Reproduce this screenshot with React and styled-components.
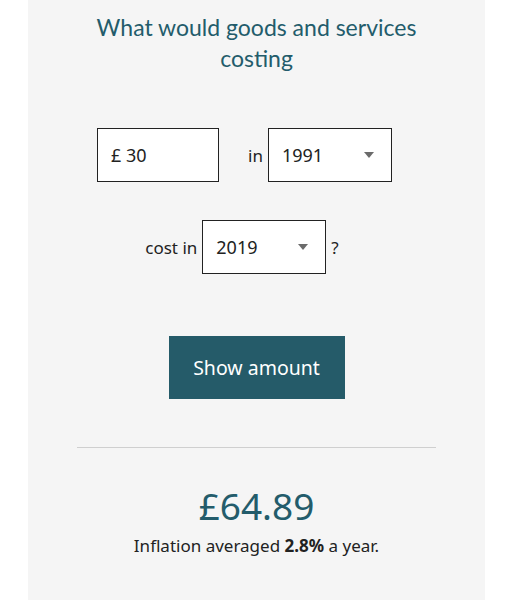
import React from 'react'
import styled, { createGlobalStyle } from 'styled-components'

const GlobalStyle = createGlobalStyle`
    body {
        margin: 0;
        background: #ffffff;
        font-family: 'Noto Sans', 'Open Sans', sans-serif;
    }
`

const Panel = styled.main`
    width: 457px;
    min-height: 600px;
    margin: 0 auto;
    padding: 12px 0 40px;
    box-sizing: border-box;
    background: #f5f5f5;
    display: flex;
    flex-direction: column;
    align-items: center;
`

const Heading = styled.h1`
    margin: 0;
    width: 340px;
    font-family: Lato, 'Noto Sans', sans-serif;
    font-size: 23px;
    line-height: 31px;
    font-weight: 400;
    text-align: center;
    color: #235c6b;
`

const Row = styled.div`
    display: flex;
    align-items: center;
    justify-content: center;
    padding-right: 24px;
    margin-top: ${(p) => p.$top}px;
    font-size: 17px;
    color: #222;
`

const Label = styled.span`
    margin: 0 ${(p) => p.$right || 5}px 0 ${(p) => p.$left || 0}px;
`

const Field = styled.div`
    width: ${(p) => p.$width}px;
    height: 54px;
    box-sizing: border-box;
    border: 1.5px solid #222;
    background: #fff;
    display: flex;
    align-items: center;
    justify-content: space-between;
    padding: 0 17px 0 13px;
    font-size: 18px;
    color: #222;
`

const Caret = styled.span`
    width: 0;
    height: 0;
    border-left: 5px solid transparent;
    border-right: 5px solid transparent;
    border-top: 6px solid #6b6b6b;
`

const Select = ({ value, width }) => (
    <Field $width={width}>
        <span>{value}</span>
        <Caret />
    </Field>
)

const Button = styled.button`
    margin-top: 62px;
    width: 176px;
    height: 63px;
    border: none;
    background: #255b69;
    color: #fff;
    font-family: inherit;
    font-size: 19.5px;
    cursor: pointer;
`

const Divider = styled.hr`
    margin: 48px 0 0;
    width: 359px;
    border: none;
    border-top: 1px solid #cfcfcf;
`

const Amount = styled.div`
    margin-top: 36px;
    font-size: 37px;
    line-height: 44px;
    color: #235c6b;
`

const Note = styled.p`
    margin: 6px 0 0;
    font-size: 17px;
    color: #222;
    b {
        font-weight: 700;
    }
`

export default function App() {
    return (
        <>
            <GlobalStyle />
            <Panel>
                <Heading>What would goods and services costing</Heading>

                <Row $top={54}>
                    <Field $width={122}>£ 30</Field>
                    <Label $left={29}>in</Label>
                    <Select value='1991' width={124} />
                </Row>

                <Row $top={38}>
                    <Label>cost in</Label>
                    <Select value='2019' width={124} />
                    <Label $left={5}>?</Label>
                </Row>

                <Button>Show amount</Button>

                <Divider />

                <Amount>£64.89</Amount>
                <Note>
                    Inflation averaged <b>2.8%</b> a year.
                </Note>
            </Panel>
        </>
    )
}
